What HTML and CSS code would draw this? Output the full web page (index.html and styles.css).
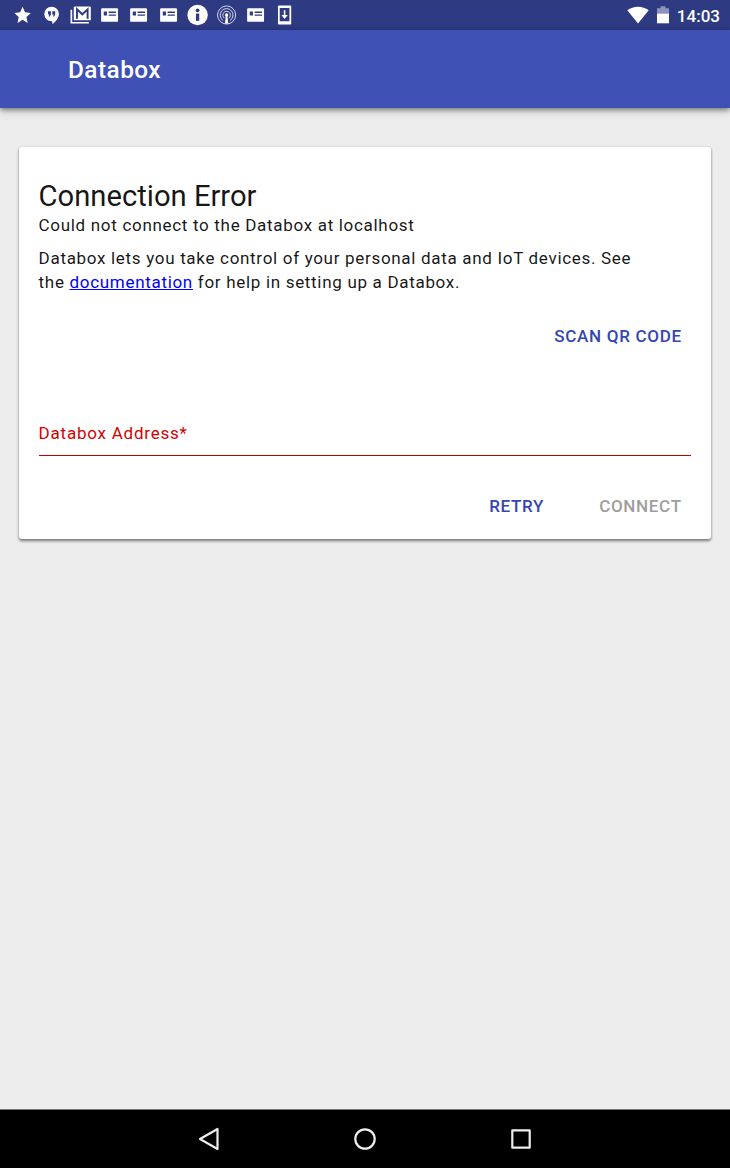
FILE: index.html
```html
<!DOCTYPE html>
<html lang="en">
<head>
<meta charset="utf-8">
<title>Databox</title>
<link rel="stylesheet" href="styles.css">
</head>
<body>
<svg class="defs" width="0" height="0" aria-hidden="true">
  <symbol id="news" viewBox="-15 -15 30 30"><path fill="#fff" fill-rule="evenodd" d="M-7.500-7h15q1.200 0 1.200 1.200v11.600q0 1.200-1.200 1.200h-15q-1.200 0-1.200-1.200v-11.600q0-1.200 1.200-1.200zM-6-3.500v4h3.300v-4zM-1-3.500v1.400h7.500v-1.400zM-1-.6v1.400h7.500v-1.400z"/></symbol>
</svg>
<div class="screen">
  <div class="status">
    <div class="notifications">
      <svg class="note" viewBox="-15 -15 30 30"><path fill="#fff" d="M0-8.500 2.500-2.700 8.500-2.100 4 2.100 5.200 8.200 0 5-5.200 8.200-4 2.100-8.500-2.100-2.500-2.700z"/></svg>
      <svg class="note" viewBox="-15 -15 30 30"><path fill="#fff" d="M0-8.500a7.500 7.500 0 0 1 7.500 7.500C7.500 3.500 4 7 .7 9.300V6.500H0a7.500 7.500 0 0 1 0-15z"/><path fill="#2e3a82" d="M-3.700-3.800h3v3.300l-1.100 2h-1.300l.8-2h-1.400zM.7-3.800h3v3.300l-1.100 2H1.300l.8-2H.7z"/></svg>
      <svg class="note" viewBox="-15 -15 30 30"><path fill="none" stroke="#fff" stroke-width="1.700" d="M-9.500-5.500V8H8.500"/><rect x="-7" y="-8.800" width="17.500" height="14.300" rx="1.200" fill="#fff"/><path fill="none" stroke="#2e3a82" stroke-width="2" d="M-3.700 3.800V-5.800L1.700-.7 7.200-5.800V3.800"/></svg>
      <svg class="note"><use href="#news"/></svg>
      <svg class="note"><use href="#news"/></svg>
      <svg class="note"><use href="#news"/></svg>
      <svg class="note" viewBox="-15 -15 30 30"><circle r="10.500" fill="#fff"/><circle cy="-4.800" r="1.900" fill="#2e3a82"/><path fill="#2e3a82" d="M-1.700-1.500h3.400v7.500h-3.400z"/></svg>
      <svg class="note" viewBox="-15 -15 30 30"><g fill="none" stroke="#d9dcef" stroke-width="1"><circle r="9.300"/><path d="M-3.500 5.600a6.600 6.600 0 1 1 7 0M-2.300 3.200a3.900 3.900 0 1 1 4.600 0"/></g><circle r="1.700" fill="#fff"/><path fill="#fff" d="M-.7 0h1.400l1 8.800h-3.400z"/></svg>
      <svg class="note"><use href="#news"/></svg>
      <svg class="note" viewBox="-15 -15 30 30"><path fill="#fff" fill-rule="evenodd" d="M-6-9.800H6q.8 0 .8.800V9q0 .8-.8.800H-6q-.8 0-.8-.8V-9q0-.8.800-.8zM-5-7.200V6.300H5V-7.200z"/><path fill="#fff" d="M-.8-5H.8v5h2.500L0 4-3.300 0h2.500z"/></svg>
    </div>
    <div class="system">
      <svg class="wifi" viewBox="0 0 22 18"><path fill="#fff" d="M11 17.500.3 4.300C6.500-.6 15.500-.6 21.700 4.300z"/></svg>
      <svg class="battery" viewBox="0 0 12 18"><path fill="#8b92be" d="M0 2.300h3.500V.3h5v2H12v6H0z"/><path fill="#fff" d="M0 7.700h12v9.600H0z"/></svg>
      <span class="clock">14:03</span>
    </div>
  </div>
  <header class="toolbar"><h1 class="title">Databox</h1></header>
  <main class="content">
    <section class="card">
      <h2 class="heading">Connection Error</h2>
      <p class="message">Could not connect to the Databox at localhost</p>
      <p class="help">Databox lets you take control of your personal data and IoT devices. See<br>the <a class="link" href="#">documentation</a> for help in setting up a Databox.</p>
      <div class="actions scan"><button class="button">SCAN QR CODE</button></div>
      <div class="field"><span class="label">Databox Address*</span></div>
      <div class="actions connect"><button class="button">RETRY</button><button class="button" disabled>CONNECT</button></div>
    </section>
  </main>
  <nav class="navbar">
    <svg class="nav-icon" viewBox="-15 -15 30 30"><path d="M-9 0 8.500-10V10z"/></svg>
    <svg class="nav-icon" viewBox="-15 -15 30 30"><circle r="9.700"/></svg>
    <svg class="nav-icon" viewBox="-15 -15 30 30"><rect x="-8.700" y="-8.700" width="17.400" height="17.400"/></svg>
  </nav>
</div>
</body>
</html>
```
FILE: styles.css
```css
* { box-sizing: border-box; }
body { margin: 0; font-family: Roboto, sans-serif; }
h1, h2, p { margin: 0; font-weight: 400; }
.defs { display: block; height: 0; }
.screen { display: flex; flex-direction: column; width: 730px; height: 1168px; background: #ededed; }
.status { display: flex; justify-content: space-between; height: 30px; padding: 0 10px 0 7.600px; background: #2e3a82; }
.notifications { display: flex; }
.note { width: 29.200px; height: 30px; }
.system { display: flex; align-items: center; }
.wifi { width: 22px; height: 18px; margin-right: 8px; }
.battery { width: 12px; height: 18px; margin-right: 8px; }
.clock { color: #fff; font-size: 17px; font-weight: 500; line-height: 30px; padding-top: 2px; }
.toolbar { display: flex; align-items: center; height: 78px; padding-left: 68px; background: #3f51b5; box-shadow: 0 2px 5px rgba(0,0,0,.45), 0 5px 10px rgba(0,0,0,.09); }
.title { color: #fff; font-size: 24.330px; font-weight: 500; letter-spacing: .02em; }
.content { flex: 1; padding: 39px 19.400px; }
.card { height: 392px; padding: 31px 19.600px 0; background: #fff; border-radius: 3px; box-shadow: 0 1.500px 3px rgba(0,0,0,.42), 0 2px 3px rgba(0,0,0,.12); color: rgba(0,0,0,.92); }
.heading { font-size: 29.200px; line-height: 37px; }
.message, .help { font-size: 17.030px; letter-spacing: .04em; line-height: 24.330px; white-space: nowrap; }
.message { margin-top: -2px; }
.help { margin-top: 8.500px; }
.message, .help, .heading { margin-left: -.4px; }
.link { color: #00f; }
.actions { display: flex; justify-content: flex-end; height: 44px; }
.scan { margin-top: 20px; }
.button { padding: 0 9.300px; border: 0; background: none; color: #3346b4; font: 500 17.030px/44px Roboto, sans-serif; letter-spacing: .04em; }
.button:disabled { color: #9e9e9e; }
.field { height: 98px; display: flex; align-items: flex-end; padding-bottom: 10px; border-bottom: 1px solid #c40000; }
.label { margin-left: -.4px; color: #d50000; font-size: 17.030px; letter-spacing: .045em; line-height: 24px; }
.connect { gap: 36.400px; margin-top: 28px; }
.navbar { display: flex; align-items: center; justify-content: center; gap: 126px; height: 59px; background: #000; border-top: 1px solid #777; }
.nav-icon { width: 30px; height: 30px; fill: none; stroke: #eee; stroke-width: 2.200; stroke-linejoin: round; }
```
